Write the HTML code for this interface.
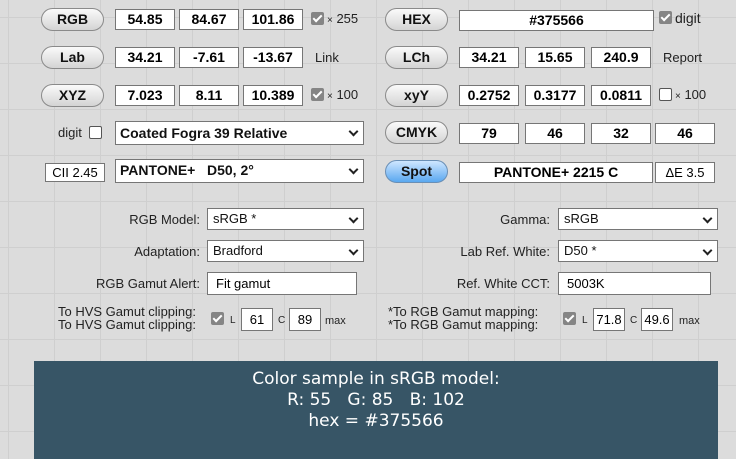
<!DOCTYPE html>
<html><head><meta charset="utf-8"><style>
*{box-sizing:border-box;margin:0;padding:0}
body{width:736px;height:459px;overflow:hidden;position:relative;font-family:"Liberation Sans",Arial,sans-serif;
background-color:#dcdcdc;
background-image:linear-gradient(to right,#cfcfcf 1px,transparent 1px),linear-gradient(to bottom,#cfcfcf 1px,transparent 1px);
background-size:46px 46px;background-position:8px 17px;}
.a{position:absolute}
.btn{position:absolute;width:63px;height:23px;border:1px solid #8a8a8a;border-radius:12px;background:linear-gradient(#fafafa,#d4d4d4);font-weight:bold;font-size:14px;text-align:center;line-height:21px;color:#111}
.spot{background:linear-gradient(#cfe6ff,#5aa8f0);border-color:#6a8fb5}
.in{position:absolute;height:21px;border:1px solid #767676;background:#fff;font-weight:bold;font-size:14px;text-align:center;line-height:19px;color:#000}
.t{position:absolute;font-size:13px;color:#222;white-space:nowrap}
.cb{position:absolute;width:13px;height:13px;border-radius:2px}
.cb.on{background:#858585}
.cb.on::after{content:"";position:absolute;left:4px;top:1px;width:3px;height:7px;border:solid #fff;border-width:0 2px 2px 0;transform:rotate(45deg)}
.cb.off{background:#fff;border:1px solid #555}
.sel{position:absolute;height:22px;border:1px solid #767676;background:#fff;font-size:13px;line-height:20px;padding-left:5px;color:#111}
.sel::after{content:"";position:absolute;right:6px;top:6px;width:5px;height:5px;border:solid #222;border-width:0 2px 2px 0;transform:rotate(45deg)}
.big{font-weight:bold;font-size:14px;padding-left:4px}
.lab{position:absolute;font-size:13px;color:#222;text-align:right}
.sm{position:absolute;height:23px;border:1px solid #767676;background:#fff;font-size:13px;text-align:center;line-height:21px}
</style></head><body>
<div class="btn" style="left:41px;top:8px">RGB</div>
<div class="in" style="left:115px;top:9px;width:60px">54.85</div>
<div class="in" style="left:179px;top:9px;width:60px">84.67</div>
<div class="in" style="left:243px;top:9px;width:60px">101.86</div>
<div class="cb on" style="left:311px;top:12px"></div><div class="t" style="left:327px;top:11px"><span style="font-size:10px">×</span> 255</div>

<div class="btn" style="left:41px;top:46px">Lab</div>
<div class="in" style="left:115px;top:47px;width:60px">34.21</div>
<div class="in" style="left:179px;top:47px;width:60px">-7.61</div>
<div class="in" style="left:243px;top:47px;width:60px">-13.67</div>
<div class="t" style="left:315px;top:50px">Link</div>

<div class="btn" style="left:41px;top:84px">XYZ</div>
<div class="in" style="left:115px;top:85px;width:60px">7.023</div>
<div class="in" style="left:179px;top:85px;width:60px">8.11</div>
<div class="in" style="left:243px;top:85px;width:60px">10.389</div>
<div class="cb on" style="left:311px;top:88px"></div><div class="t" style="left:327px;top:87px"><span style="font-size:10px">×</span> 100</div>

<div class="t" style="left:58px;top:125px">digit</div><div class="cb off" style="left:89px;top:126px"></div>
<div class="sel big" style="left:115px;top:121px;width:249px;height:24px;line-height:22px">Coated Fogra 39 Relative</div>
<div class="in" style="left:45px;top:163px;width:60px;height:19px;font-weight:normal;font-size:13px;line-height:17px">CII 2.45</div>
<div class="sel big" style="left:115px;top:159px;width:249px;height:24px;line-height:20px">PANTONE+&nbsp;&nbsp; D50, 2°</div>

<div class="btn" style="left:385px;top:8px">HEX</div>
<div class="in" style="left:459px;top:10px;width:195px">#375566</div>
<div class="cb on" style="left:659px;top:11px"></div><div class="t" style="left:675px;top:10px;font-size:14px">digit</div>

<div class="btn" style="left:385px;top:46px">LCh</div>
<div class="in" style="left:459px;top:47px;width:60px">34.21</div>
<div class="in" style="left:525px;top:47px;width:60px">15.65</div>
<div class="in" style="left:591px;top:47px;width:60px">240.9</div>
<div class="t" style="left:663px;top:50px">Report</div>

<div class="btn" style="left:385px;top:84px">xyY</div>
<div class="in" style="left:459px;top:85px;width:60px">0.2752</div>
<div class="in" style="left:525px;top:85px;width:60px">0.3177</div>
<div class="in" style="left:591px;top:85px;width:60px">0.0811</div>
<div class="cb off" style="left:659px;top:88px"></div><div class="t" style="left:675px;top:87px"><span style="font-size:10px">×</span> 100</div>

<div class="btn" style="left:385px;top:121px">CMYK</div>
<div class="in" style="left:459px;top:123px;width:60px">79</div>
<div class="in" style="left:525px;top:123px;width:60px">46</div>
<div class="in" style="left:591px;top:123px;width:60px">32</div>
<div class="in" style="left:655px;top:123px;width:60px">46</div>

<div class="btn spot" style="left:385px;top:160px">Spot</div>
<div class="in" style="left:459px;top:162px;width:194px">PANTONE+ 2215 C</div>
<div class="in" style="left:655px;top:162px;width:60px;font-weight:normal;font-size:13px">ΔE 3.5</div>

<div class="lab" style="left:0;width:200px;top:212px">RGB Model:</div>
<div class="sel" style="left:207px;top:208px;width:157px">sRGB *</div>
<div class="lab" style="left:0;width:200px;top:244px">Adaptation:</div>
<div class="sel" style="left:207px;top:240px;width:157px">Bradford</div>
<div class="lab" style="left:0;width:200px;top:276px">RGB Gamut Alert:</div>
<div class="sm" style="left:207px;top:272px;width:150px;text-align:left;padding-left:8px">Fit gamut</div>
<div class="lab" style="left:0;width:196px;top:305px;line-height:13px">To HVS Gamut clipping:<br>To HVS Gamut clipping:</div>
<div class="cb on" style="left:211px;top:312px"></div>
<div class="t" style="left:230px;top:315px;font-size:10px">L</div>
<div class="sm" style="left:241px;top:308px;width:32px">61</div>
<div class="t" style="left:278px;top:315px;font-size:10px">C</div>
<div class="sm" style="left:289px;top:308px;width:32px">89</div>
<div class="t" style="left:325px;top:315px;font-size:11px">max</div>

<div class="lab" style="left:350px;width:200px;top:212px">Gamma:</div>
<div class="sel" style="left:558px;top:208px;width:160px">sRGB</div>
<div class="lab" style="left:350px;width:200px;top:244px">Lab Ref. White:</div>
<div class="sel" style="left:558px;top:240px;width:160px">D50 *</div>
<div class="lab" style="left:350px;width:200px;top:276px">Ref. White CCT:</div>
<div class="sm" style="left:558px;top:272px;width:153px;text-align:left;padding-left:8px">5003K</div>
<div class="t" style="left:388px;top:305px;line-height:13px">*To RGB Gamut mapping:<br>*To RGB Gamut mapping:</div>
<div class="cb on" style="left:563px;top:312px"></div>
<div class="t" style="left:582px;top:315px;font-size:10px">L</div>
<div class="sm" style="left:593px;top:308px;width:32px">71.8</div>
<div class="t" style="left:630px;top:315px;font-size:10px">C</div>
<div class="sm" style="left:641px;top:308px;width:32px">49.6</div>
<div class="t" style="left:679px;top:315px;font-size:11px">max</div>

<div class="a" style="left:34px;top:361px;width:684px;height:98px;background:#375566;color:#fff;font-family:'DejaVu Sans',Verdana,sans-serif;font-size:17px;text-align:center;line-height:21px;padding-top:8px">Color sample in sRGB model:<br>R: 55&nbsp;&nbsp; G: 85&nbsp;&nbsp; B: 102<br>hex = #375566</div>
</body></html>
